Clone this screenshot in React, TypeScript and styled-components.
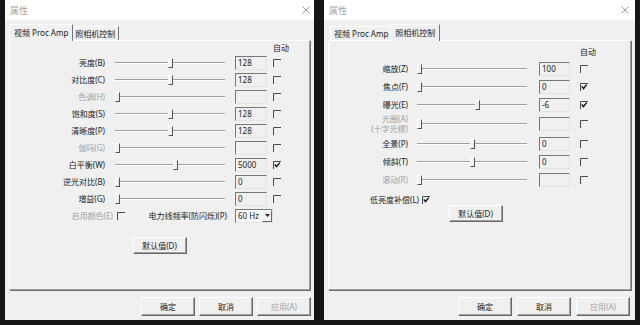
import React from 'react'
import styled, { createGlobalStyle } from 'styled-components'

const GlobalStyle = createGlobalStyle`
  html, body { margin:0; padding:0; background:#151515; }
  body {
    font-family: "Noto Sans", "Noto Sans CJK SC", sans-serif;
    font-size:8px;
    color:#222;
  }
`

type Cols = { label: number; sGap: number; slider: number; bGap: number; box: number; cGap: number }

type Ctrl = {
    label: string[];
    value?: string;
    thumb: number;
    auto?: boolean;
    off?: boolean;
    h: number;
}

const Desk = styled.div`
    display:flex;
    gap:10px;
    padding-left:5px;
    width:640px;
    height:325px;
    box-sizing:border-box;
    overflow:hidden;
`;

const Window = styled.div<{ $w: number }>`
    width:${p => p.$w}px;
    height:320px;
    flex-shrink:0;
    background:#f0f0f0;
    display:flex;
    flex-direction:column;
`;

const TitleBar = styled.div<{ $pr: number }>`
    height:20px;
    background:#fff;
    display:flex;
    align-items:center;
    justify-content:space-between;
    padding:0 ${p => p.$pr}px 0 5px;
    color:#a8a8a8;
    font-size:9px;
`;

const Tabs = styled.div`
    display:flex;
    align-items:flex-end;
    height:14px;
    margin:6px 0 0 6px;
`;

const Tab = styled.div<{ $active?: boolean }>`
    position:relative;
    z-index:${p => p.$active ? 2 : 1};
    height:${p => p.$active ? 17 : 14}px;
    line-height:${p => p.$active ? 15 : 13}px;
    padding:${p => p.$active ? '0 4px 0 4px' : '0 3px'};
    margin:0 ${p => p.$active ? -2 : 0}px -${p => p.$active ? 1 : 0}px;
    box-sizing:border-box;
    background:#f0f0f0;
    border-top:1px solid #fff;
    border-left:1px solid #fff;
    border-right:1px solid #777;
    white-space:nowrap;
`;

const Panel = styled.div`
    position:relative;
    margin:0 4px;
    height:250px;
    box-sizing:border-box;
    border:1px solid;
    border-color:#fff #a0a0a0 #a0a0a0 #fff;
    box-shadow:1px 1px 0 #6f6f6f;
    display:flex;
    flex-direction:column;
`;

const Header = styled.div<{ $indent: number; $pt: number; $h: number }>`
    padding:${p => p.$pt}px 0 0 ${p => p.$indent}px;
    height:${p => p.$h}px;
    box-sizing:border-box;
    line-height:12px;
`;

const Row = styled.div<{ $h: number; $mt?: number; $pl?: number }>`
    display:flex;
    align-items:center;
    height:${p => p.$h}px;
    margin-top:${p => p.$mt || 0}px;
    padding-left:${p => p.$pl || 0}px;
    flex-shrink:0;
`;

const Label = styled.div<{ $w?: number; $off?: boolean }>`
    width:${p => p.$w ? p.$w + 'px' : 'auto'};
    flex-shrink:0;
    text-align:right;
    line-height:10px;
    white-space:nowrap;
    color:${p => p.$off ? '#a3a3a3' : '#222'};
`;

const Track = styled.div<{ $gap: number; $w: number }>`
    position:relative;
    margin-left:${p => p.$gap}px;
    width:${p => p.$w}px;
    height:2px;
    box-sizing:border-box;
    border-top:1px solid #a0a0a0;
    border-bottom:1px solid #fff;
    flex-shrink:0;
`;

const Thumb = styled.div`
    position:absolute;
    top:-5px;
    width:5px;
    height:10px;
    box-sizing:border-box;
    background:#f0f0f0;
    border-top:1px solid #fff;
    border-left:1px solid #fff;
    border-right:1px solid #555;
    border-bottom:1px solid #555;
`;

const Field = styled.div<{ $gap: number; $w: number }>`
    margin-left:${p => p.$gap}px;
    width:${p => p.$w}px;
    height:14px;
    flex-shrink:0;
    box-sizing:border-box;
    border:1px solid;
    border-color:#777 #e4e4e4 #e4e4e4 #777;
    padding-left:2px;
    line-height:12px;
    color:#222;
`;

const Box = styled.span<{ $gap: number }>`
    display:inline-flex;
    margin-left:${p => p.$gap}px;
    width:8px;
    height:8px;
    flex-shrink:0;
`;

const Select = styled.div<{ $gap: number }>`
    margin-left:${p => p.$gap}px;
    width:38px;
    height:14px;
    box-sizing:border-box;
    border:1px solid;
    border-color:#777 #e4e4e4 #e4e4e4 #777;
    background:#f7f7f7;
    display:flex;
    justify-content:space-between;
    line-height:12px;
    padding-left:2px;
`;

const SelectArrow = styled.div`
    width:10px;
    box-sizing:border-box;
    border:1px solid;
    border-color:#fff #696969 #696969 #fff;
    background:#f0f0f0;
    display:flex;
    align-items:center;
    justify-content:center;
`;

const ButtonRow = styled.div<{ $mt: number; $pr: number }>`
    display:flex;
    justify-content:center;
    margin-top:${p => p.$mt}px;
    padding-right:${p => p.$pr}px;
`;

const Button = styled.div<{ $w?: number; $h?: number; $off?: boolean }>`
    width:${p => p.$w || 54}px;
    height:${p => p.$h || 19}px;
    box-sizing:border-box;
    border:1px solid;
    border-color:#fff #696969 #696969 #fff;
    box-shadow:inset -1px -1px 0 #a0a0a0;
    background:#f0f0f0;
    display:flex;
    align-items:center;
    justify-content:center;
    color:${p => p.$off ? '#a3a3a3' : '#222'};
`;

const Footer = styled.div<{ $pr: number; $gap: number }>`
    display:flex;
    justify-content:flex-end;
    gap:${p => p.$gap}px;
    padding:7px ${p => p.$pr}px 0 0;
`;

const Close = () => (
    <svg width="8" height="8" viewBox="0 0 8 8">
        <path d="M0.5 0.5L7.5 7.5M7.5 0.5L0.5 7.5" stroke="#a0a0a0" strokeWidth="1" fill="none" />
    </svg>
)

const Check = ({ on, gap }: { on?: boolean; gap: number }) => (
    <Box $gap={gap}>
        <svg width="8" height="8" viewBox="0 0 8 8">
            <path d="M0.5 8V0.5H8" stroke="#4a4a4a" strokeWidth="1" fill="none" />
            {on && <path d="M1.8 3.4L3.5 5.7L6.7 1.6" stroke="#111" strokeWidth="1.4" fill="none" />}
        </svg>
    </Box>
)

const Control = ({ c, cols }: { c: Ctrl; cols: Cols }) => (
    <Row $h={c.h}>
        <Label $w={cols.label} $off={c.off}>
            {c.label.map((l) => <div key={l}>{l}</div>)}
        </Label>
        <Track $gap={cols.sGap} $w={cols.slider}>
            <Thumb style={{ left: c.thumb }} />
        </Track>
        <Field $gap={cols.bGap} $w={cols.box}>{c.value}</Field>
        <Check gap={cols.cGap} on={c.auto} />
    </Row>
)

const Dialog = ({ w, closePr, active, pr, gap, children }:
    { w: number; closePr: number; active: number; pr: number; gap: number; children: React.ReactNode }) => (
    <Window $w={w}>
        <TitleBar $pr={closePr}>
            <span>属性</span>
            <Close />
        </TitleBar>
        <Tabs>
            <Tab $active={active === 0}>视频 Proc Amp</Tab>
            <Tab $active={active === 1}>照相机控制</Tab>
        </Tabs>
        <Panel>{children}</Panel>
        <Footer $pr={pr} $gap={gap}>
            <Button>确定</Button>
            <Button>取消</Button>
            <Button $off>应用(A)</Button>
        </Footer>
    </Window>
)

const ampCols: Cols = { label: 95, sGap: 10, slider: 110, bGap: 10, box: 32, cGap: 6 };
const camCols: Cols = { label: 79, sGap: 9, slider: 110, bGap: 12, box: 31, cGap: 10 };

const amp: Ctrl[] = [
    { label: ['亮度(B)'], value: '128', thumb: 53, h: 17 },
    { label: ['对比度(C)'], value: '128', thumb: 53, h: 17 },
    { label: ['色调(H)'], thumb: 0, off: true, h: 17 },
    { label: ['饱和度(S)'], value: '128', thumb: 53, h: 17 },
    { label: ['清晰度(P)'], value: '128', thumb: 53, h: 17 },
    { label: ['伽玛(G)'], thumb: 0, off: true, h: 17 },
    { label: ['白平衡(W)'], value: '5000', thumb: 58, auto: true, h: 17 },
    { label: ['逆光对比(B)'], value: '0', thumb: 0, h: 17 },
    { label: ['增益(G)'], value: '0', thumb: 0, h: 17 },
];

const cam: Ctrl[] = [
    { label: ['缩放(Z)'], value: '100', thumb: 0, h: 18 },
    { label: ['焦点(F)'], value: '0', thumb: 0, auto: true, h: 18 },
    { label: ['曝光(E)'], value: '-6', thumb: 58, auto: true, h: 17 },
    { label: ['光圈(A)', '(十字光標)'], thumb: 0, off: true, h: 21 },
    { label: ['全景(P)'], value: '0', thumb: 53, h: 19 },
    { label: ['倾斜(T)'], value: '0', thumb: 53, h: 18 },
    { label: ['滚动(R)'], thumb: 0, off: true, h: 18 },
];

const App = () => {
    return (
        <Desk>
            <GlobalStyle />
            <Dialog w={309} closePr={4} active={0} pr={3} gap={4}>
                <Header $indent={263} $pt={1} $h={13}>自动</Header>
                {amp.map((c) => <Control key={c.label[0]} c={c} cols={ampCols} />)}
                <Row $h={17}>
                    <Label $w={103} $off>启用颜色(E)</Label>
                    <Check gap={4} />
                    <Label $w={102}>电力线频率(防闪烁)(P)</Label>
                    <Select $gap={8}>
                        <span>60 Hz</span>
                        <SelectArrow>
                            <svg width="5" height="3" viewBox="0 0 5 3"><path d="M0 0H5L2.5 3Z" fill="#222" /></svg>
                        </SelectArrow>
                    </Select>
                </Row>
                <ButtonRow $mt={13} $pr={0}>
                    <Button $h={17}>默认值(D)</Button>
                </ButtonRow>
            </Dialog>
            <Dialog w={311} closePr={6} active={1} pr={5} gap={5}>
                <Header $indent={251} $pt={5} $h={19}>自动</Header>
                {cam.map((c) => <Control key={c.label[0]} c={c} cols={camCols} />)}
                <Row $h={12} $mt={5} $pl={41}>
                    <Label>低亮度补偿(L)</Label>
                    <Check gap={3} on />
                </Row>
                <ButtonRow $mt={-1} $pr={8}>
                    <Button $h={17}>默认值(D)</Button>
                </ButtonRow>
            </Dialog>
        </Desk>
    )
}

export default App;
